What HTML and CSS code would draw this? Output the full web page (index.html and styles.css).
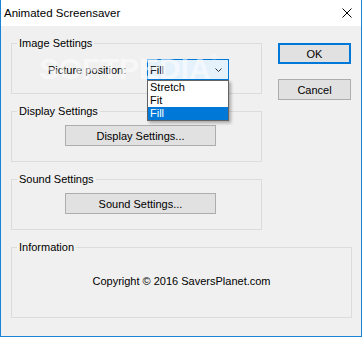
FILE: index.html
```html
<!DOCTYPE html>
<html lang="en">

<head>
    <meta charset="UTF-8">
    <title>Animated Screensaver</title>
    <link rel="stylesheet" href="styles.css">
</head>

<body>
    <div class="window">
        <div class="titlebar">
            <span class="title">Animated Screensaver</span>
            <svg class="close" width="10" height="10" viewBox="0 0 10 10">
                <path d="M0.5 0.5 L9.5 9.5 M9.5 0.5 L0.5 9.5" stroke="#000" stroke-width="1" fill="none" />
            </svg>
        </div>

        <div class="client">
            <div class="top-row">
                <div class="groups">
                    <div class="group">
                        <div class="group-title">Image Settings</div>
                        <div class="field-row">
                            <span class="field-label">Picture position:</span>
                            <div class="combo">
                                <span>Fill</span>
                                <svg class="chevron" width="7" height="4" viewBox="0 0 7 4">
                                    <path d="M0.5 0.5 L3.5 3.5 L6.5 0.5" stroke="#333" stroke-width="1" fill="none" />
                                </svg>
                                <ul class="combo-list">
                                    <li>Stretch</li>
                                    <li>Fit</li>
                                    <li class="selected">Fill</li>
                                </ul>
                            </div>
                        </div>
                    </div>

                    <div class="group">
                        <div class="group-title">Display Settings</div>
                        <button class="btn btn-wide">Display Settings...</button>
                    </div>

                    <div class="group">
                        <div class="group-title">Sound Settings</div>
                        <button class="btn btn-wide">Sound Settings...</button>
                    </div>
                </div>

                <div class="actions">
                    <button class="btn btn-default">OK</button>
                    <button class="btn">Cancel</button>
                </div>
            </div>

            <div class="group group-info">
                <div class="group-title">Information</div>
                <p class="copyright">Copyright &copy; 2016 SaversPlanet.com</p>
            </div>
        </div>

        <!-- watermark sits over the dialog -->
        <div class="watermark">SOFTPEDIA<span class="reg">&reg;</span></div>
    </div>
</body>

</html>
```

FILE: styles.css
```css
body {
    margin: 0;
    font-family: "Liberation Sans", Arial, sans-serif;
    font-size: 11px;
    color: #000;
    background-color: #fff;
}

.window {
    position: relative;
    width: 362px;
    height: 337px;
    box-sizing: border-box;
    border: 1px solid #1883d7;
    border-top: none;
    background-color: #f0f0f0;
    display: flex;
    flex-direction: column;
    overflow: hidden;
}

.titlebar {
    height: 26px;
    flex-shrink: 0;
    background-color: #fff;
    display: flex;
    align-items: center;
    justify-content: space-between;
    padding: 0 9px 0 3px;
}

.title {
    font-size: 11.5px;
}

.close {
    display: block;
}

.client {
    flex: 1;
    padding: 17px 9px 0 10px;
}

.top-row {
    display: flex;
    align-items: flex-start;
}

.groups {
    width: 251px;
    display: flex;
    flex-direction: column;
    gap: 17px;
}

.group {
    height: 51px;
    box-sizing: border-box;
    border: 1px solid #dcdcdc;
}

.group-title {
    width: fit-content;
    margin: -8px 0 0 5px;
    padding: 0 2px;
    line-height: 14px;
    background-color: #f0f0f0;
}

.field-row {
    display: flex;
    align-items: center;
    margin-top: 9px;
    padding-left: 36px;
}

.field-label {
    width: 99px;
}

.combo {
    position: relative;
    width: 82px;
    height: 21px;
    box-sizing: border-box;
    border: 1px solid #0078d7;
    background-color: #e5f1fb;
    display: flex;
    align-items: center;
    justify-content: space-between;
    padding: 0 6px 0 2px;
}

.combo-list {
    position: absolute;
    top: calc(100% + 1px);
    left: -1px;
    width: 82px;
    box-sizing: border-box;
    margin: 0;
    padding: 0;
    list-style: none;
    background-color: #fff;
    border: 1px solid #646464;
    box-shadow: 2px 2px 3px rgba(0, 0, 0, 0.3);
    z-index: 2;
}

.combo-list li {
    line-height: 13px;
    padding-left: 2px;
}

.combo-list .selected {
    background-color: #0078d7;
    color: #fff;
}

.btn {
    display: block;
    height: 21px;
    box-sizing: border-box;
    padding: 0;
    font-family: inherit;
    font-size: 11px;
    color: #000;
    background-color: #e1e1e1;
    border: 1px solid #adadad;
}

.btn-wide {
    width: 151px;
    margin: 7px 0 0 53px;
}

.actions {
    margin-left: 16px;
    width: 73px;
    display: flex;
    flex-direction: column;
    gap: 15px;
}

.btn-default {
    border: 2px solid #0078d7;
}

.group-info {
    margin-top: 17px;
    height: 71px;
}

.copyright {
    margin: 21px 0 0;
    text-align: center;
}

.watermark {
    position: absolute;
    left: 38px;
    top: 52px;
    font-size: 30px;
    font-weight: bold;
    color: rgba(255, 255, 255, 0.55);
    pointer-events: none;
    z-index: 1;
}

.watermark .reg {
    font-size: 9px;
    vertical-align: top;
}
```
